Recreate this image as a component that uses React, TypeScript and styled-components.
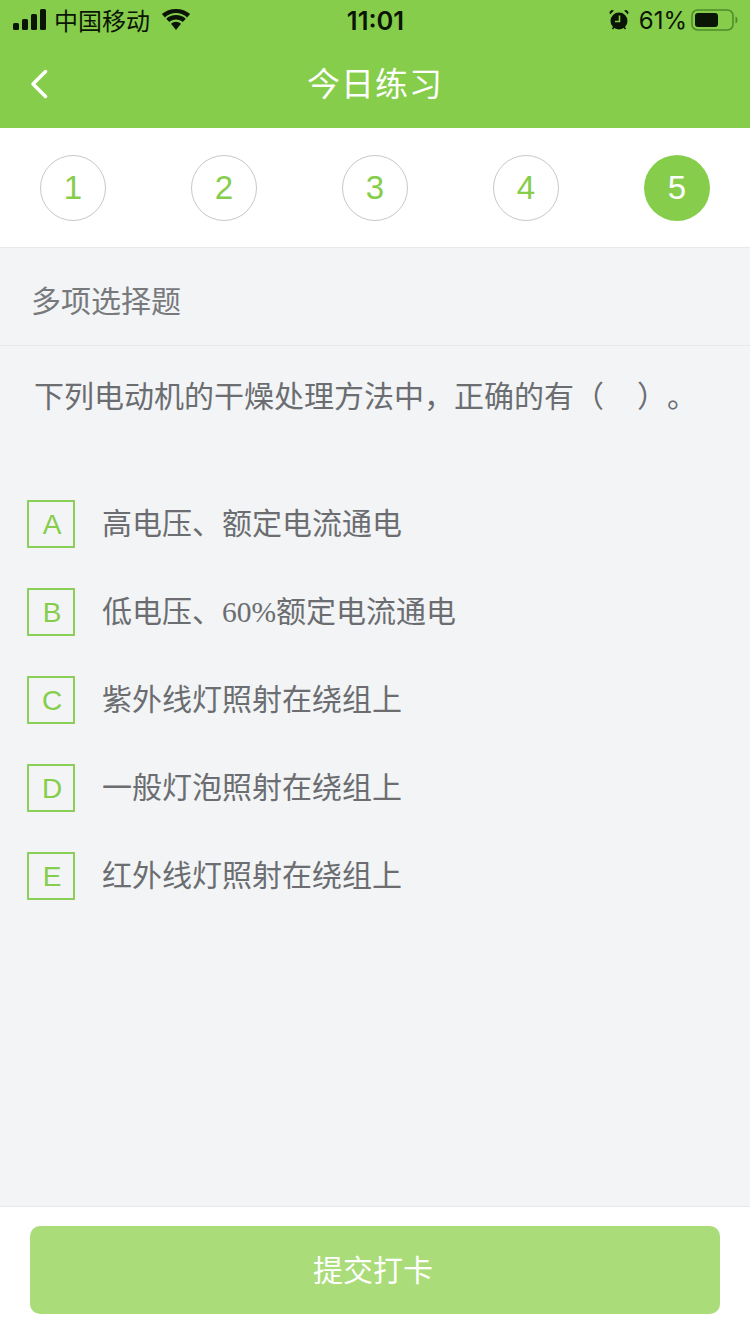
import * as React from "react"
import styled, { createGlobalStyle } from "styled-components"

const CJK = `"Noto Sans CJK SC", "Liberation Sans", sans-serif`

const GlobalStyle = createGlobalStyle`
    html, body {
        margin: 0;
        padding: 0;
        background: #f2f4f6;
    }
    * {
        box-sizing: border-box;
    }
`

const Page = styled.div`
    width: 750px;
    height: 1334px;
    display: flex;
    flex-direction: column;
    overflow: hidden;
    background: #f2f4f6;
    font-family: ${CJK};
`

const Top = styled.div`
    height: 128px;
    flex-shrink: 0;
    background: #86cd4b;
    display: flex;
    flex-direction: column;
`

const StatusBar = styled.div`
    height: 40px;
    padding: 0 12px 0 13px;
    display: grid;
    grid-template-columns: 1fr auto 1fr;
    align-items: center;
    color: #0b1505;
`

const StatusLeft = styled.div`
    display: flex;
    align-items: center;
`

const StatusRight = styled.div`
    display: flex;
    align-items: center;
    justify-content: flex-end;
`

const Carrier = styled.span`
    font-size: 24px;
    line-height: 40px;
    margin-left: 7px;
    margin-right: 11px;
`

const Time = styled.span`
    font-family: "Inter", "Liberation Sans", sans-serif;
    font-size: 25.5px;
    font-weight: 600;
`

const Battery = styled.span`
    font-family: "Inter", "Liberation Sans", sans-serif;
    font-size: 24px;
    margin: 0 4px 0 10px;
`

const NavBar = styled.div`
    flex: 1;
    display: flex;
    align-items: center;
    justify-content: center;
    position: relative;
    padding-bottom: 4px;
`

const BackIcon = styled.svg`
    position: absolute;
    left: 28px;
    top: 27px;
`

const Title = styled.h1`
    margin: 0;
    color: #fff;
    font-size: 33px;
    font-weight: 400;
    letter-spacing: 1px;
`

const Steps = styled.div`
    height: 120px;
    flex-shrink: 0;
    background: #fff;
    border-bottom: 1px solid #e8e9eb;
    padding: 27px 40px 0;
    display: flex;
    justify-content: space-between;
    align-items: flex-start;
`

const Step = styled.div<{ $active?: boolean }>`
    width: 66px;
    height: 66px;
    border-radius: 50%;
    display: flex;
    align-items: center;
    justify-content: center;
    font-family: "Liberation Sans", sans-serif;
    font-size: 33px;
    border: ${(p) => (p.$active ? "none" : "1px solid #c8c8c8")};
    background: ${(p) => (p.$active ? "#86cd4b" : "#fff")};
    color: ${(p) => (p.$active ? "#fff" : "#86cd4b")};
`

const TypeLabel = styled.div`
    height: 98px;
    flex-shrink: 0;
    padding-left: 31px;
    padding-top: 4px;
    border-bottom: 1px solid #e8e9eb;
    display: flex;
    align-items: center;
    color: #77797c;
    font-size: 30px;
    line-height: 1;
`

const Question = styled.p`
    margin: 0;
    padding: 27px 0 0 34px;
    height: 154px;
    flex-shrink: 0;
    color: #6b6d70;
    font-size: 30px;
    line-height: 42px;
    white-space: pre;
    text-spacing-trim: space-all;
`

const Options = styled.div`
    flex: 1;
    display: flex;
    flex-direction: column;
    gap: 40px;
    padding-left: 27px;
`

const Option = styled.div`
    display: flex;
    align-items: center;
    height: 48px;
`

const Letter = styled.span`
    width: 48px;
    height: 48px;
    flex-shrink: 0;
    border: 2px solid #8ccf57;
    display: flex;
    align-items: center;
    justify-content: center;
    padding: 1px 0 0 2px;
    font-family: "Liberation Sans", sans-serif;
    font-size: 28px;
    color: #86cd4b;
    margin-right: 27px;
`

const OptionText = styled.span`
    color: #6b6d70;
    font-size: 30px;
    line-height: 48px;
    padding-bottom: 6px;
`

const Percent = styled.span`
    font-family: "Liberation Serif", serif;
    font-size: 29.5px;
    line-height: 0;
`

const Footer = styled.div`
    height: 128px;
    flex-shrink: 0;
    background: #fff;
    border-top: 1px solid #e8e9eb;
    padding: 19px 30px 0;
`

const SubmitButton = styled.button`
    width: 690px;
    height: 88px;
    border: none;
    border-radius: 10px;
    background: #aadc79;
    color: #fff;
    font-family: ${CJK};
    font-size: 30px;
    padding: 0 4px 4px 0;
`

const Signal = () => (
    <svg width="34" height="22" viewBox="0 0 34 22" fill="#0b1505">
        <rect x="0" y="14" width="6" height="7" rx="1.5" />
        <rect x="9" y="10" width="6" height="11" rx="1.5" />
        <rect x="18" y="5" width="6" height="16" rx="1.5" />
        <rect x="27" y="0" width="6" height="21" rx="1.5" />
    </svg>
)

const Wifi = () => (
    <svg width="30" height="22" viewBox="0 0 30 22" fill="#0b1505">
        <path d="M15 4c4.400 0 8.200 1.700 11.100 4.400l3-3.300C25.500 1.800 20.500 0 15 0S4.500 1.800.9 5.100l3 3.300C6.800 5.700 10.600 4 15 4z" />
        <path d="M15 10.400c2.700 0 5 1 6.800 2.600l3-3.300C22.200 7.300 18.800 6 15 6S7.800 7.300 5.200 9.700l3 3.300c1.800-1.600 4.100-2.600 6.800-2.600z" />
        <path d="M15 12.700c-2 0-3.700.8-5 2L15 21l5-6.300c-1.300-1.200-3-2-5-2z" />
    </svg>
)

const Alarm = () => (
    <svg width="20" height="22" viewBox="0 0 20 22">
        <circle cx="10" cy="12" r="8.500" fill="#0b1505" />
        <path d="M1 5.500 5 1.500 2.500 1 .5 3zM19 5.500 15 1.500 17.500 1 19.500 3z" fill="#0b1505" />
        <path d="M3.500 20l1.500-2M16.500 20 15 18" stroke="#0b1505" strokeWidth="1.500" />
        <path d="M10.500 6.500v6H6" stroke="#86cd4b" strokeWidth="1.600" fill="none" />
    </svg>
)

const BatteryIcon = () => (
    <svg width="47" height="22" viewBox="0 0 47 22">
        <rect x="1" y="1" width="41" height="20" rx="5.500" fill="none" stroke="#4f8a2a" strokeWidth="1.500" />
        <rect x="4" y="4" width="23" height="14" rx="3" fill="#0b1505" />
        <path d="M44.500 7.500c1.300.5 2 1.800 2 3.500s-.7 3-2 3.500z" fill="#4f8a2a" />
    </svg>
)

const steps = [1, 2, 3, 4, 5]

const options: { letter: string; text: React.ReactNode }[] = [
    { letter: "A", text: "高电压、额定电流通电" },
    { letter: "B", text: <>低电压、<Percent>60%</Percent>额定电流通电</> },
    { letter: "C", text: "紫外线灯照射在绕组上" },
    { letter: "D", text: "一般灯泡照射在绕组上" },
    { letter: "E", text: "红外线灯照射在绕组上" },
]

const App = () => {
    return (
        <Page>
            <GlobalStyle />
            <Top>
                <StatusBar>
                    <StatusLeft>
                        <Signal />
                        <Carrier>中国移动</Carrier>
                        <Wifi />
                    </StatusLeft>
                    <Time>11:01</Time>
                    <StatusRight>
                        <Alarm />
                        <Battery>61%</Battery>
                        <BatteryIcon />
                    </StatusRight>
                </StatusBar>
                <NavBar>
                    <BackIcon width="22" height="34" viewBox="0 0 22 34" fill="none">
                        <path d="M17.500 4.500 5 17l12.500 12.500" stroke="#fff" strokeWidth="3.500" strokeLinecap="round" strokeLinejoin="round" />
                    </BackIcon>
                    <Title>今日练习</Title>
                </NavBar>
            </Top>
            <Steps>
                {steps.map((n) => (
                    <Step key={n} $active={n === 5}>{n}</Step>
                ))}
            </Steps>
            <TypeLabel>多项选择题</TypeLabel>
            <Question>{"下列电动机的干燥处理方法中，正确的有（    \u2009）。"}</Question>
            <Options>
                {options.map((o) => (
                    <Option key={o.letter}>
                        <Letter>{o.letter}</Letter>
                        <OptionText>{o.text}</OptionText>
                    </Option>
                ))}
            </Options>
            <Footer>
                <SubmitButton>提交打卡</SubmitButton>
            </Footer>
        </Page>
    )
}

export default App
